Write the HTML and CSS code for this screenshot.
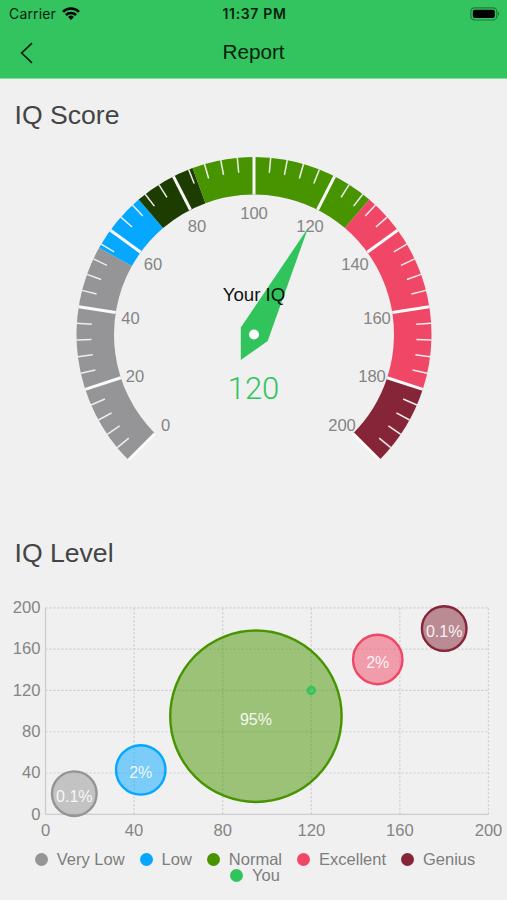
FILE: index.html
```
<!DOCTYPE html>
<html lang="en">

<head>
    <meta charset="UTF-8">
    <meta name="viewport" content="width=device-width, initial-scale=1.0">
    <title>Report</title>
    <link rel="stylesheet" href="styles.css">
</head>

<body>
    <!-- Header -->
    <header class="header">
        <div class="status-bar">
            <div class="carrier">
                <span>Carrier</span>
                <svg class="wifi" viewBox="0 0 18 13" width="18" height="13">
                    <path d="M1 4.8a11.2 11.2 0 0 1 16 0" />
                    <path d="M3.9 8a7.2 7.2 0 0 1 10.2 0" />
                    <path class="wifi-dot" d="M9 13l-2.9-3a4.1 4.1 0 0 1 5.8 0z" />
                </svg>
            </div>
            <div class="time">11:37 PM</div>
            <svg class="battery" viewBox="0 0 30 14" width="30" height="14">
                <rect class="battery-case" x="0.8" y="0.8" width="26" height="12.2" rx="3.8" />
                <rect x="2.8" y="2.7" width="22" height="8.4" rx="2" />
                <path class="battery-cap" d="M28 4.8q2.4 2.2 0 4.4z" />
            </svg>
        </div>
        <nav class="nav-bar">
            <a class="back" href="#" aria-label="Back">
                <svg viewBox="0 0 14 22" width="14" height="22">
                    <path d="M12 1.2L1.7 11 12 20.8" />
                </svg>
            </a>
            <h1>Report</h1>
        </nav>
    </header>

    <!-- Score -->
    <section class="score">
        <h2>IQ Score</h2>
        <svg id="gauge" class="chart" viewBox="0 140 507 340" width="507" height="340"></svg>
    </section>

    <!-- Level -->
    <section class="level">
        <h2>IQ Level</h2>
        <svg id="bubbles" class="chart" viewBox="0 596 507 248" width="507" height="248"></svg>
        <ul class="legend" id="legend"></ul>
    </section>

    <script>
        const gauge = { x: 254, y: 334.5, outer: 177.5, inner: 140, value: 120 };

        const ranges = [
            { from: 0, to: 55, color: '#959597' },
            { from: 55, to: 70, color: '#05a7ff' },
            { from: 70, to: 85, color: '#1d3c00' },
            { from: 85, to: 130, color: '#479400' },
            { from: 130, to: 180, color: '#f14766' },
            { from: 180, to: 200, color: '#862538' }
        ];

        const gaugeLabels = [
            [165.5, 425], [135, 376], [130.5, 317.5], [153, 264], [197, 226], [254, 212.5],
            [310, 226], [355, 264], [377, 317.5], [372, 376], [342, 425]
        ];

        const levels = [
            { name: 'Very Low', x: 13, y: 20, r: 22.3, label: '0.1%', color: '#959595' },
            { name: 'Low', x: 43, y: 43, r: 24.7, label: '2%', color: '#05a7ff' },
            { name: 'Normal', x: 95, y: 95, r: 85.7, label: '95%', color: '#479400' },
            { name: 'Excellent', x: 150, y: 150, r: 24.7, label: '2%', color: '#f14766' },
            { name: 'Genius', x: 180, y: 180, r: 22.3, label: '0.1%', color: '#862538' },
            { name: 'You', x: 120, y: 120, r: 3.5, label: '', color: '#31c45d' }
        ];

        // 270 degree dial, 0 at the bottom left
        function point(value, radius) {
            const angle = (225 - value * 1.35) * Math.PI / 180;
            return [gauge.x + radius * Math.cos(angle), gauge.y - radius * Math.sin(angle)];
        }

        function line(a, b, cls) {
            return `<line class="${cls}" x1="${a[0]}" y1="${a[1]}" x2="${b[0]}" y2="${b[1]}" />`;
        }

        function text(x, y, value, cls) {
            return `<text class="${cls}" x="${x}" y="${y}">${value}</text>`;
        }

        function drawGauge() {
            let out = '';
            ranges.forEach(r => {
                out += `<path fill="${r.color}" d="M${point(r.from, gauge.outer)}
                    A${gauge.outer} ${gauge.outer} 0 0 1 ${point(r.to, gauge.outer)}
                    L${point(r.to, gauge.inner)}
                    A${gauge.inner} ${gauge.inner} 0 0 0 ${point(r.from, gauge.inner)}Z" />`;
            });
            for (let v = 0; v <= 200; v += 4) {
                if (v % 20 === 0) {
                    out += line(point(v, gauge.outer), point(v, gauge.inner), 'split');
                } else {
                    out += line(point(v, gauge.outer), point(v, gauge.outer - 15), 'tick');
                }
            }
            gaugeLabels.forEach((p, i) => {
                out += text(p[0], p[1] + 6, i * 20, 'label');
            });
            out += '<path class="needle" d="M308 228L267.7 340.9L240.8 360V327.6Z" />';
            out += `<circle class="pin" cx="${gauge.x}" cy="${gauge.y}" r="5" />`;
            out += text(254, 301.3, 'Your IQ', 'gauge-title');
            out += text(253.5, 398.8, gauge.value, 'gauge-value');
            document.getElementById('gauge').innerHTML = out;
        }

        function drawBubbles() {
            const px = x => 45.5 + x * 2.215;
            const py = y => 814.3 - y * 1.032;
            let out = '';
            for (let v = 0; v <= 200; v += 40) {
                const cls = v === 0 ? 'axis' : 'grid';
                out += line([px(0), py(v)], [px(200), py(v)], cls);
                out += line([px(v), py(0)], [px(v), py(200)], cls);
                out += text(40.5, py(v) + 5.3, v, 'label y-label');
                out += text(px(v), 835.5, v, 'label');
            }
            levels.forEach(l => {
                out += `<circle class="bubble" cx="${px(l.x)}" cy="${py(l.y)}" r="${l.r}" fill="${l.color}" stroke="${l.color}" />`;
                out += text(px(l.x), py(l.y) + 8.5, l.label, 'bubble-label');
            });
            document.getElementById('bubbles').innerHTML = out;
        }

        function drawLegend() {
            document.getElementById('legend').innerHTML = levels.map(l => `
                <li><span class="dot" style="background: ${l.color}"></span>${l.name}</li>
            `).join('');
        }

        drawGauge();
        drawBubbles();
        drawLegend();
    </script>
</body>

</html>
```
FILE: styles.css
```
body {
    margin: 0;
    height: 900px;
    overflow: hidden;
    font-family: 'Liberation Sans', Arial, sans-serif;
    background-color: #f0f0f0;
    color: #444;
}

.header {
    height: 78px;
    background: #33c45f;
    border-bottom: 1px solid #7fdc9b;
    color: #06210e;
}

.status-bar {
    display: grid;
    grid-template-columns: 1fr auto 1fr;
    align-items: center;
    height: 27px;
    padding: 0 7px 0 9px;
    font-family: Inter, sans-serif;
    font-size: 14px;
}

.carrier {
    display: flex;
    align-items: center;
    gap: 6px;
    letter-spacing: 0.15px;
}

.wifi {
    fill: none;
    stroke: #000;
    stroke-width: 2.5;
}

.wifi .wifi-dot {
    fill: #000;
    stroke: none;
}

.time {
    font-weight: 600;
    font-size: 14px;
    letter-spacing: 0.65px;
}

.battery {
    justify-self: end;
}

.battery-case {
    fill: none;
    stroke: #1f7a3b;
    stroke-width: 1.2;
}

.battery-cap {
    fill: #1f7a3b;
}

.nav-bar {
    display: grid;
    grid-template-columns: 1fr auto 1fr;
    align-items: center;
    height: 51px;
    padding: 0 20px;
}

.nav-bar h1 {
    margin: 0;
    padding-bottom: 2px;
    font-size: 20.7px;
    font-weight: normal;
}

.back {
    display: flex;
}

.back svg {
    fill: none;
    stroke: #06210e;
    stroke-width: 1.7;
}

h2 {
    margin: 0;
    padding-left: 14.5px;
    font-size: 26.6px;
    font-weight: normal;
    line-height: 30px;
}

.score {
    padding-top: 21px;
}

.score .chart {
    margin-top: 10px;
}

.level {
    padding-top: 58px;
}

.level .chart {
    margin-top: 28px;
}

.chart {
    display: block;
}

.label {
    fill: #858585;
    font-size: 16.6px;
    text-anchor: middle;
}

.y-label {
    text-anchor: end;
}

.split {
    stroke: #fafafa;
    stroke-width: 3;
}

.tick {
    stroke: #eee;
    stroke-width: 1.5;
}

.needle {
    fill: #31c45d;
}

.pin {
    fill: #fff;
}

.gauge-title {
    fill: #111;
    font-size: 18.7px;
    text-anchor: middle;
}

.gauge-value {
    fill: #31c45d;
    font-family: Roboto, 'Liberation Sans', sans-serif;
    font-size: 31px;
    font-weight: 300;
    text-anchor: middle;
}

.axis {
    stroke: #ccc;
    stroke-width: 1.3;
}

.grid {
    stroke: #ccc;
    stroke-width: 1.2;
    stroke-dasharray: 2 2;
}

.bubble {
    fill-opacity: 0.5;
    stroke-width: 2.4;
}

.bubble-label {
    fill: #fff;
    fill-opacity: 0.9;
    font-size: 16px;
    text-anchor: middle;
}

.legend {
    display: flex;
    flex-wrap: wrap;
    justify-content: center;
    column-gap: 15px;
    margin: 7px 0 0;
    padding: 0 20px 0 23px;
    list-style: none;
    color: #7d7d7d;
    font-size: 16.5px;
    line-height: 16px;
}

.legend li {
    display: flex;
    align-items: center;
    gap: 9px;
}

.dot {
    width: 13px;
    height: 13px;
    border-radius: 50%;
}
```
